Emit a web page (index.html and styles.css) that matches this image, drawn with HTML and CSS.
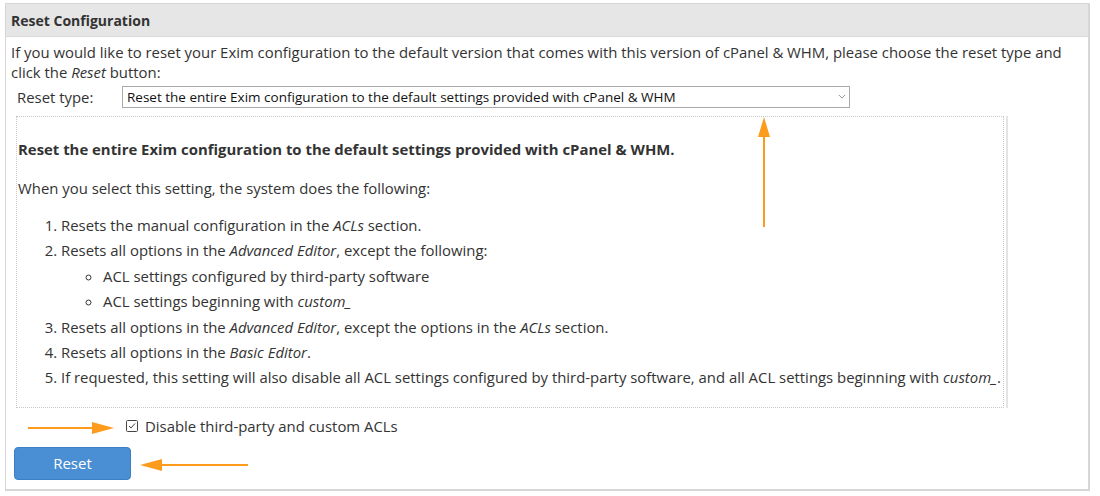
FILE: index.html
```html
<!DOCTYPE html>
<html lang="en">
<head>
    <meta charset="UTF-8">
    <title>Reset Configuration</title>
    <link rel="stylesheet" href="styles.css">
</head>
<body>
    <div class="panel">
        <div class="panel-heading">Reset Configuration</div>
        <div class="panel-body">
            <p class="intro">If you would like to reset your Exim configuration to the default version that comes with this version of cPanel &amp; WHM, please choose the reset type and click the <em>Reset</em> button:</p>

            <div class="type-row">
                <label for="resetType">Reset type:</label>
                <div class="select-wrap">
                    <select id="resetType">
                        <option>Reset the entire Exim configuration to the default settings provided with cPanel &amp; WHM</option>
                    </select>
                    <svg class="caret" viewBox="0 0 10 6" fill="none" stroke="#777" stroke-width="1"><path d="M1 1l4 4 4-4"/></svg>
                </div>
            </div>

            <div class="desc-frame">
                <div class="desc">
                    <h4>Reset the entire Exim configuration to the default settings provided with cPanel &amp; WHM.</h4>
                    <p>When you select this setting, the system does the following:</p>
                    <ol>
                        <li>Resets the manual configuration in the <em>ACLs</em> section.</li>
                        <li>Resets all options in the <em>Advanced Editor</em>, except the following:
                            <ul>
                                <li>ACL settings configured by third-party software</li>
                                <li>ACL settings beginning with <em>custom_</em></li>
                            </ul>
                        </li>
                        <li>Resets all options in the <em>Advanced Editor</em>, except the options in the <em>ACLs</em> section.</li>
                        <li>Resets all options in the <em>Basic Editor</em>.</li>
                        <li>If requested, this setting will also disable all ACL settings configured by third-party software, and all ACL settings beginning with <em>custom_</em>.</li>
                    </ol>
                </div>
            </div>

            <label class="check-row">
                <span class="check-box">
                    <svg viewBox="0 0 12 12" fill="none" stroke="#444" stroke-width="1"><rect x="0.5" y="0.5" width="11" height="11" rx="1"/><path d="M3 6l2 2 4-4.5"/></svg>
                </span>
                Disable third-party and custom ACLs
            </label>

            <button class="btn-reset">Reset</button>
        </div>

        <!-- annotation arrows -->
        <svg class="arrow arrow-up" viewBox="0 0 14 110"><path d="M7 0l6 20H1z" fill="#fd9b1c"/><line x1="7" y1="16" x2="7" y2="110" stroke="#fd9b1c" stroke-width="2"/></svg>
        <svg class="arrow arrow-right" viewBox="0 0 86 14"><line x1="0" y1="7" x2="70" y2="7" stroke="#fd9b1c" stroke-width="2"/><path d="M86 7L64 1v12z" fill="#fd9b1c"/></svg>
        <svg class="arrow arrow-left" viewBox="0 0 108 14"><path d="M0 7l22-6v12z" fill="#fd9b1c"/><line x1="16" y1="7" x2="108" y2="7" stroke="#fd9b1c" stroke-width="2"/></svg>
    </div>
</body>
</html>
```

FILE: styles.css
```css
* {
    box-sizing: border-box;
}

body {
    margin: 0;
    padding: 3px 10px 0 5px;
    font-family: 'Open Sans', 'Noto Sans', sans-serif;
    font-size: 14.9px;
    color: #333;
    background: #fff;
}

.panel {
    position: relative;
    width: 1085px;
    border: 1px solid #d6d6d6;
    border-right-width: 2px;
    border-bottom-width: 2px;
}

.panel-heading {
    height: 33px;
    line-height: 33px;
    padding: 0 5px;
    background: #e6e6e6;
    border-bottom: 1px solid #d9d9d9;
    font-size: 14px;
    font-weight: 700;
}

.panel-body {
    padding: 5px 10px 9px 5px;
}

.intro {
    margin: 0;
    line-height: 20px;
}

.type-row {
    display: flex;
    align-items: center;
    margin-top: 4px;
    padding-left: 6px;
}

.type-row label {
    width: 105px;
}

.select-wrap {
    position: relative;
    width: 728px;
}

.select-wrap select {
    width: 100%;
    height: 22px;
    padding: 0 20px 0 4px;
    border: 1px solid #a9a9a9;
    border-radius: 0;
    background: #fff;
    font-family: 'Open Sans', 'Noto Sans', sans-serif;
    font-size: 13.5px;
    color: #111;
    appearance: none;
}

.caret {
    position: absolute;
    right: 4px;
    top: 8px;
    width: 8px;
    height: 5px;
}

.desc-frame {
    width: 992px;
    margin: 8px 0 0 5px;
    padding-right: 2px;
    border-right: 2px solid #e4e4e4;
}

.desc {
    border: 1px dotted #c8c8c8;
    padding: 17px 0 16px 1px;
}

.desc h4 {
    margin: 0 0 12px;
    font-size: 14.9px;
    font-weight: 700;
    line-height: 30px;
}

.desc p {
    margin: 0 0 12px;
    line-height: 25px;
}

.desc ol {
    margin: 0;
    padding-left: 43px;
    line-height: 25.4px;
}

.desc ul {
    margin: 0;
    padding-left: 42px;
    list-style: circle;
}

.check-row {
    display: flex;
    align-items: center;
    gap: 7px;
    margin: 7px 0 0 115px;
    line-height: 22px;
}

.check-box {
    display: flex;
    width: 12px;
    height: 12px;
}

.check-box svg {
    width: 12px;
    height: 12px;
}

.btn-reset {
    display: block;
    width: 117px;
    height: 33px;
    margin: 10px 0 0 3px;
    border: 1px solid #3b7fc4;
    border-radius: 4px;
    background: #4a8ed3;
    color: #fff;
    font-family: 'Open Sans', 'Noto Sans', sans-serif;
    font-size: 15px;
}

.arrow {
    position: absolute;
}

.arrow-up {
    left: 751px;
    top: 113px;
    width: 14px;
    height: 110px;
}

.arrow-right {
    left: 22px;
    top: 417px;
    width: 86px;
    height: 14px;
}

.arrow-left {
    left: 134px;
    top: 454px;
    width: 108px;
    height: 14px;
}
```
